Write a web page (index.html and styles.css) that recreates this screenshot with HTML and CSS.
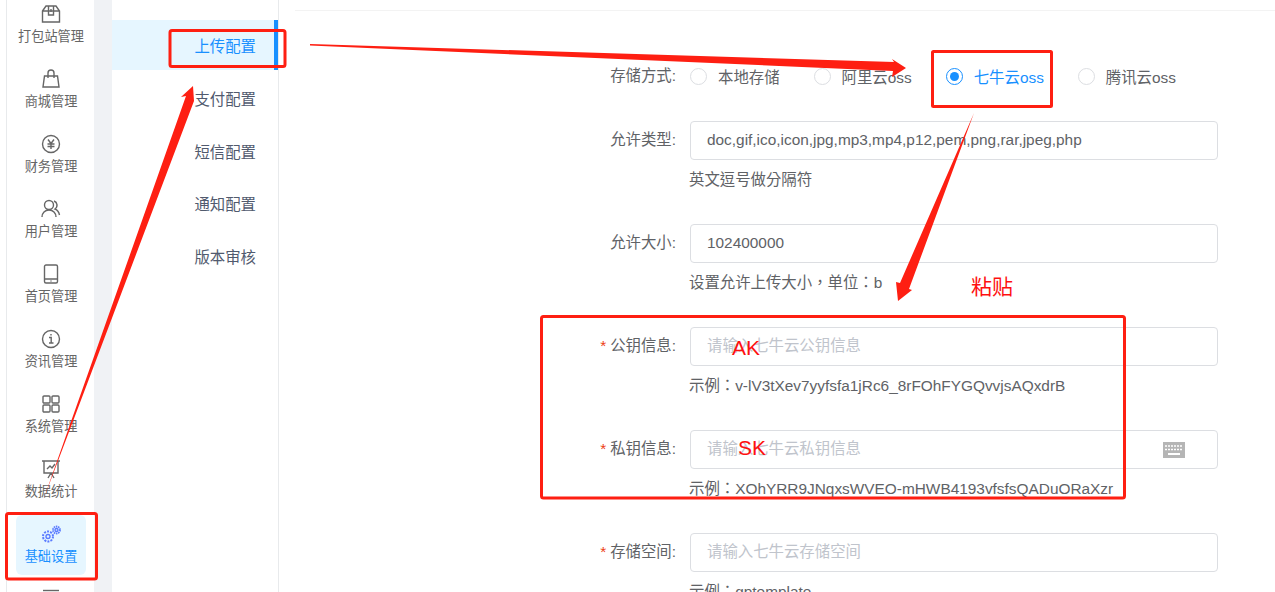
FILE: index.html
```html
<!DOCTYPE html>
<html lang="zh-CN">
<head>
<meta charset="utf-8">
<title>上传配置</title>
<link rel="stylesheet" href="styles.css">
</head>
<body>
<div class="page">
  <aside class="rail">
    <a class="rail-item"><svg class="ico" viewBox="0 0 20 20"><path d="M1.500 7 5 2h10l3.500 5v11h-17zM1.500 7h17M7.500 2v9h5V2M10 5v3"/></svg><span>打包站管理</span></a>
    <a class="rail-item"><svg class="ico" viewBox="0 0 20 20"><path d="M3.500 7h13L18 18H2zM7 9V4a3 3 0 0 1 6 0v5"/></svg><span>商城管理</span></a>
    <a class="rail-item"><svg class="ico" viewBox="0 0 20 20"><circle cx="10" cy="10" r="8.500"/><path d="m7 5.500 3 4 3-4M6.500 10h7M6.500 12.500h7M10 9.500V15"/></svg><span>财务管理</span></a>
    <a class="rail-item"><svg class="ico" viewBox="0 0 20 20"><circle cx="8" cy="6" r="4.500"/><path d="M1 18c0-4 3-7 7-7s7 3 7 7M13 2a4.500 4.500 0 0 1 1 8c2.500 1 4 3.500 4.500 6"/></svg><span>用户管理</span></a>
    <a class="rail-item"><svg class="ico" viewBox="0 0 20 20"><rect x="3.500" y="1" width="13" height="18" rx="1.500"/><path d="M3.500 15h13M9.500 17h1"/></svg><span>首页管理</span></a>
    <a class="rail-item"><svg class="ico" viewBox="0 0 20 20"><circle cx="10" cy="10" r="8.500"/><path d="M8 8.500h2.200V14M8 14h4.500M10 5v1.500"/></svg><span>资讯管理</span></a>
    <a class="rail-item"><svg class="ico" viewBox="0 0 20 20"><rect x="2" y="2" width="7" height="7" rx="1"/><rect x="11" y="2" width="7" height="7" rx="1"/><rect x="2" y="11" width="7" height="7" rx="1"/><rect x="11" y="11" width="7" height="7" rx="1"/></svg><span>系统管理</span></a>
    <a class="rail-item"><svg class="ico" viewBox="0 0 20 20"><path d="M1 2h18M3 2v12h14V2M6 10l3-3 2 2 3-4M10 14l-3 5M10 14l3 5"/></svg><span>数据统计</span></a>
    <a class="rail-item rail-active"><svg class="ico ico-gear" viewBox="0 0 20 20"><circle cx="7" cy="12.500" r="2"/><circle cx="7" cy="12.500" r="5" stroke-dasharray="2 1.140" stroke-width="2"/><circle cx="15.500" cy="6" r="1.500"/><circle cx="15.500" cy="6" r="3.500" stroke-dasharray="1.500 .7" stroke-width="1.800"/></svg><span>基础设置</span></a>
    <a class="rail-item"><svg class="ico" viewBox="0 0 20 20"><path d="M2 1.500h16"/></svg></a>
  </aside>
  <nav class="sub">
    <a class="sub-item sub-active">上传配置</a>
    <a class="sub-item">支付配置</a>
    <a class="sub-item">短信配置</a>
    <a class="sub-item">通知配置</a>
    <a class="sub-item">版本审核</a>
  </nav>
  <main class="main">
    <form class="form">
      <div class="row row-radio">
        <label class="lbl">存储方式:</label>
        <div class="radios">
          <span class="radio"><i class="dot"></i>本地存储</span>
          <span class="radio"><i class="dot"></i>阿里云oss</span>
          <span class="radio radio-on"><i class="dot"></i>七牛云oss</span>
          <span class="radio"><i class="dot"></i>腾讯云oss</span>
        </div>
      </div>
      <div class="row">
        <label class="lbl">允许类型:</label>
        <div class="ctl"><div class="input">doc,gif,ico,icon,jpg,mp3,mp4,p12,pem,png,rar,jpeg,php</div><p class="hint" lang="zh-TW">英文逗号做分隔符</p></div>
      </div>
      <div class="row">
        <label class="lbl">允许大小:</label>
        <div class="ctl"><div class="input">102400000</div><p class="hint" lang="zh-TW">设置允许上传大小，单位：b</p></div>
      </div>
      <div class="row">
        <label class="lbl"><em>*</em>公钥信息:</label>
        <div class="ctl"><div class="input ph">请输入七牛云公钥信息</div><p class="hint" lang="zh-TW">示例：v-lV3tXev7yyfsfa1jRc6_8rFOhFYGQvvjsAQxdrB</p></div>
      </div>
      <div class="row">
        <label class="lbl"><em>*</em>私钥信息:</label>
        <div class="ctl"><div class="input ph">请输入七牛云私钥信息<svg class="kbd" viewBox="0 0 22 16"><rect width="22" height="16" fill="#b5b5b5"/><path d="M2 4h18M2 7.500h18" stroke="#fff" stroke-width="1.500" stroke-dasharray="2 1"/><path d="M5 12h12" stroke="#fff" stroke-width="2"/></svg></div><p class="hint" lang="zh-TW">示例：XOhYRR9JNqxsWVEO-mHWB4193vfsfsQADuORaXzr</p></div>
      </div>
      <div class="row">
        <label class="lbl"><em>*</em>存储空间:</label>
        <div class="ctl"><div class="input ph">请输入七牛云存储空间</div><p class="hint" lang="zh-TW">示例：gptemplate</p></div>
      </div>
    </form>
  </main>
</div>
<svg class="marks" viewBox="0 0 1275 592">
  <g fill="none" stroke="#fe1f12" stroke-width="3">
    <rect x="170" y="30.500" width="115" height="36" rx="2"/>
    <rect x="6.500" y="513.500" width="90" height="65.500" rx="2"/>
    <rect x="932.500" y="51.500" width="119" height="55" rx="1"/>
    <rect x="541.500" y="316.500" width="583" height="181.500" rx="2"/>
  </g>
  <g fill="#fe1f12">
    <path d="M310 44 894 62 892 59 906 68 892 77 893 71 310 45.500z"/>
    <path d="M974 113 900 283 896 282 898 301 912 290 909 289z"/>
    <path d="M44 498 186 96 181 97 193 86 194 101z"/>
  </g>
</svg>
<span class="note note-paste">粘贴</span>
<span class="note note-ak">AK</span>
<span class="note note-sk">SK</span>
</body>
</html>
```
FILE: styles.css
```css
* { box-sizing: border-box; }
html, body { margin: 0; height: 592px; overflow: hidden; }
body { font-family: "Liberation Sans", "Noto Sans CJK SC", sans-serif; font-size: 15.400px; color: #515a6e; background: #fff; position: relative; }
.page { display: flex; height: 592px; overflow: hidden; }
.rail { width: 88px; margin-left: 6px; margin-top: -5px; flex: none; border-left: 1px solid #e8eaec; background: #fff; padding-left: 9px; height: 700px; }
.rail-item { display: flex; flex-direction: column; align-items: center; width: 70px; height: 60px; margin-bottom: 5px; padding-top: 9px; border-radius: 6px; font-size: 13.200px; line-height: 20px; color: #666; }
.rail-item span { margin-top: 3px; white-space: nowrap; }
.ico { width: 20px; height: 20px; fill: none; stroke: #666; stroke-width: 1.400; flex: none; }
.rail-active { background: #e6f6ff; color: #1890ff; }
.ico-gear { stroke: #5a7bff; }
.sub { width: 185px; padding-top: 20px; flex: none; background: #fff; border-right: 1px solid #e8eaec; border-left: 18px solid #f0f2f5; height: 592px; }
.sub-item { display: block; height: 50px; margin-bottom: 2.750px; line-height: 54px; text-align: right; padding-right: 22px; color: #515a6e; }
.sub-active { background: #e6f6ff; color: #1890ff; border-right: 4px solid #1890ff; padding-right: 18px; }
.main { flex: 1; margin-top: 10px; padding-left: 16px; background: #fff; min-width: 0; }
.form { border-top: 1px solid #f3f3f3; padding: 45px 0 0 299px; }
.row { display: flex; margin-bottom: 25px; }
.row-radio { height: 40px; align-items: flex-start; }
.lbl { width: 96px; padding-right: 14px; flex: none; text-align: right; line-height: 38px; color: #606266; white-space: nowrap; }
.row-radio .lbl { line-height: 40px; }
.lbl em { color: #ed4014; font-style: normal; margin-right: 4px; }
.radios { display: flex; height: 40px; align-items: center; }
.radio { display: inline-flex; align-items: center; margin-right: 34px; white-space: nowrap; color: #606266; }
.radio-on { color: #1890ff; }
.radio-on .dot { border-color: #1890ff; }
.radio-on .dot::after { content: ""; position: absolute; inset: 3px; border-radius: 50%; background: #1890ff; }
.dot { position: relative; width: 17px; height: 17px; border: 1px solid #dcdee2; border-radius: 50%; margin-right: 11px; flex: none; }
.ctl { width: 528px; }
.input { position: relative; height: 39px; line-height: 35px; border: 1px solid #dcdee2; border-radius: 4px; padding: 0 16px; color: #606266; background: #fff; }
.ph { color: #c0c4cc; }
.kbd { position: absolute; right: 32px; top: 11px; width: 22px; height: 16px; }
.hint { margin: 10px 0 0 -1px; line-height: 20px; height: 29px; color: #606266; white-space: nowrap; font-family: "Liberation Sans", "Noto Sans CJK TC", sans-serif; }
.marks { position: absolute; left: 0; top: 0; width: 1275px; height: 592px; pointer-events: none; }
.note { position: absolute; color: #fe1010; font-size: 21px; line-height: 24px; }
.note-paste { left: 971px; top: 275px; }
.note-ak { left: 732px; top: 336px; }
.note-sk { left: 738px; top: 436px; }
```
